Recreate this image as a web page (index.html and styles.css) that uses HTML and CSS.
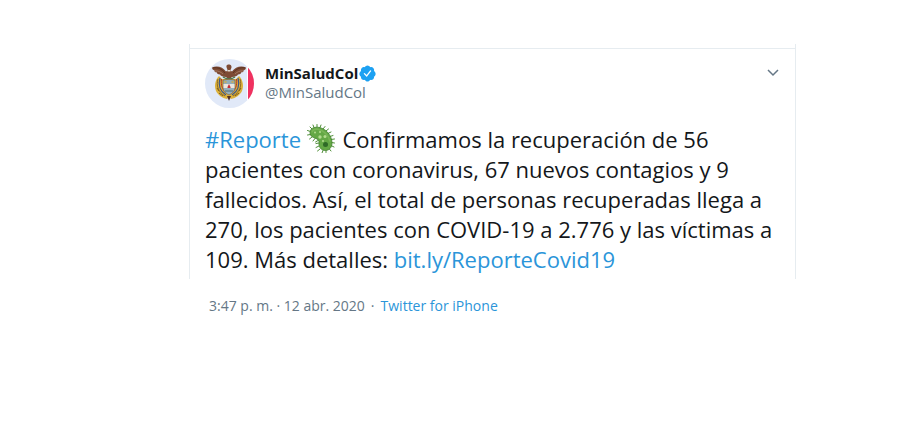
FILE: index.html
```
<!DOCTYPE html>
<html lang="es">
<head>
  <meta charset="UTF-8">
  <meta name="viewport" content="width=device-width, initial-scale=1.0">
  <title>MinSaludCol en Twitter</title>
  <link rel="stylesheet" href="styles.css">
</head>
<body>

  <main class="page">
    <article class="tweet">
      <div class="tweetBody">
        <header class="tweetHeader">
          <svg class="avatar" viewBox="0 0 49 49" aria-hidden="true">
            <defs>
              <clipPath id="avatarClip"><circle cx="24.500" cy="24.500" r="24.500"/></clipPath>
            </defs>
            <g clip-path="url(#avatarClip)">
              <rect width="49" height="49" fill="#e1e9f8"/>
              <rect x="42" width="1" height="49" fill="#fff"/>
              <rect x="43" width="6" height="49" fill="#f0315f"/>
            </g>
            <!-- flags -->
            <path d="M14 17c-4 4-5 10-3 15 2 4 6 7 11 8l2-2 2 2c5-1 9-4 11-8 2-5 1-11-3-15l-3 3H17z" fill="#dcb23c"/>
            <path d="M13 20c-2 6 0 13 7 17M35 20c2 6 0 13-7 17" fill="none" stroke="#8a6a24"/>
            <path d="M15 19c-2 7 0 13 6 17M33 19c2 7 0 13-6 17" fill="none" stroke="#3c5689" stroke-width="1.200"/>
            <path d="M16.500 20c-1 6 1 11 5 14M31.500 20c1 6-1 11-5 14" fill="none" stroke="#b8332f"/>
            <path d="M14 34l4 3M34 34l-4 3M12 29l2 3M36 29l-2 3" stroke="#7c5a1c"/>
            <!-- condor -->
            <path d="M24 5.500c-1.500-.5-3 .7-2.500 2.500.3 1.300 1 2 1 3.500l-1.500 1C18 8 12 6 7 8.500c0 1.500 1 2.500 2.500 3-.3 1 .7 2 2.500 2-.2 1 1 2 3 2 .5 1.500 3 2.500 6 2.500l3 3 3-3c3 0 5.500-1 6-2.500 2 0 3.200-1 3-2 1.800 0 2.800-1 2.500-2 1.500-.5 2.500-1.500 2.500-3C36 6 30 8 27 12.500l-1.500-1c0-1.500 1-2.200 1-3.500 0-1.500-1-2.700-2.500-2.500z" fill="#7d4b35"/>
            <path d="M8 9c5-1 9 1 12 5M40 9c-5-1-9 1-12 5" fill="none" stroke="#5c3020"/>
            <path d="M10 12c3-.5 6 1 8 3M38 12c-3-.5-6 1-8 3" fill="none" stroke="#b08368" stroke-width=".8"/>
            <path d="M22.500 11h3v1.500h-3z" fill="#e6dccf"/>
            <path d="M18 18q6 4 12 0" fill="none" stroke="#497846" stroke-width="1.500"/>
            <!-- shield -->
            <path d="M18 21q6-1.500 12 0v7c0 4-2 6-6 8-4-2-6-4-6-8z" fill="#93aebb" stroke="#8a6a3a" stroke-width=".8"/>
            <path d="M18.500 25h11v4h-11z" fill="#eae6df"/>
            <path d="M22.500 28l1.500-3 1.500 3v1h-3z" fill="#c32e35"/>
            <path d="M19.500 23h2M26.500 23h2" stroke="#d3ad43" stroke-width="1.500"/>
            <path d="M20 32h8" stroke="#5f7c80" stroke-width="1.300"/>
            <path d="M22 37h4l-2 5z" fill="#533025"/>
          </svg>
          <div class="author">
            <div class="nameRow">
              <span class="name">MinSaludCol</span>
              <svg class="verified" viewBox="1 1 22 22" role="img" aria-label="Cuenta verificada">
                <path fill="#1da1f2" d="M22.500 12.500c0-1.600-.9-3-2.100-3.700.1-.4.200-.9.200-1.300 0-2.200-1.700-4-3.800-4-.5 0-.9.100-1.300.3C14.800 2.400 13.500 1.500 12 1.500s-2.800.9-3.400 2.300c-.4-.2-.9-.3-1.300-.3-2.100 0-3.800 1.800-3.800 4 0 .5.100.9.200 1.300-1.200.7-2.200 2.100-2.200 3.700 0 1.500.8 2.800 2 3.500v.5c0 2.200 1.700 4 3.800 4 .5 0 .9-.1 1.300-.3.600 1.400 1.900 2.300 3.400 2.300s2.800-.9 3.400-2.300c.4.200.8.300 1.300.3 2.100 0 3.800-1.800 3.800-4v-.5c1.200-.7 2-2 2-3.500z"/>
                <path d="M8 12.200l3 3 5-6.500" fill="none" stroke="#fff" stroke-width="1.700" stroke-linecap="round" stroke-linejoin="round"/>
              </svg>
            </div>
            <div class="handle">@MinSaludCol</div>
          </div>
          <button class="menuButton" type="button" aria-label="Más opciones">
            <svg class="chevron" viewBox="0 0 12 8" aria-hidden="true">
              <path d="M1 1l5 5 5-5" fill="none" stroke="#657786" stroke-width="1.500"/>
            </svg>
          </button>
        </header>

        <p class="tweetText">
          <a href="#reporte">#Reporte</a>
          <svg class="microbe" viewBox="0 0 28 29" role="img" aria-label="Microbio">
            <path d="M5 5L3 3M7 3.500L6 1M10 3V.5M13 3.500l1-2.500M16 5l2-2.500M19 7l2.500-2M21 9.500l3-1.500M23 12.500l3-1M24 15.500l3.500-.5M24.500 18.500l3 .5M24 21.500l3 1.500M22 24.500l2 2.500M19 26v2.500M16 26.500l-1 2.500M13 25l-2.500 2M12 22l-3 1.500M12 19l-3 .5M11 16.500L8.500 18M8 14.500l-2 2.500M5 13l-2.500 2M3.500 10.500L.5 11M3.500 7.500l-3-1" fill="none" stroke="#4f8f38" stroke-linecap="round"/>
            <path d="M3 8.500C3 5 6.500 3 10.500 3.200 18 3.700 25 11 25 19c0 4.500-3 7.500-6.500 7.500-4 0-6.500-3-6.500-6.500 0-2 .5-3.500-2-5-3-1.500-7-2-7-6.500z" fill="#64a845" stroke="#43812f" stroke-width=".8"/>
            <path d="M5 8.500c0-2.500 3-3.800 6-3.300 6 1 11 7 12 12.300" fill="none" stroke="#79b556" stroke-width="1.600"/>
            <g fill="#b3dc8e">
              <circle cx="8" cy="8.500" r="1"/>
              <circle cx="13" cy="8" r="1"/>
              <circle cx="13" cy="13" r="1.700"/>
              <circle cx="18" cy="12.500" r="1.500"/>
              <circle cx="16" cy="17" r="1"/>
            </g>
            <circle cx="18.500" cy="20.500" r="2.500" fill="#2f6a27"/>
          </svg>
          Confirmamos la recuperación de 56
          pacientes con coronavirus, 67 nuevos contagios y 9
          fallecidos. Así, el total de personas recuperadas llega a
          270, los pacientes con COVID-19 a 2.776 y las víctimas a
          109. Más detalles: <a href="https://bit.ly/ReporteCovid19">bit.ly/ReporteCovid19</a>
        </p>
      </div>
    </article>

    <footer class="tweetMeta">
      <time datetime="2020-04-12T15:47">3:47 p. m. · 12 abr. 2020</time>
      <span>·</span>
      <a href="#source">Twitter for iPhone</a>
    </footer>
  </main>

</body>
</html>
```
FILE: styles.css
```
* {
  box-sizing: border-box;
}

body {
  margin: 0;
  background-color: #fff;
  color: #14171a;
  font-family: "Open Sans", "Noto Sans", sans-serif;
}

a {
  color: #2b95d9;
  text-decoration: none;
}

.page {
  max-width: 905px;
  padding: 44px 109px 24px 189px;
}

.tweet {
  padding-top: 4px;
  border-left: 1px solid #e6ecf0;
  border-right: 1px solid #e6ecf0;
}

.tweetBody {
  padding: 10px 15px 5px;
  border-top: 1px solid #e6ecf0;
}

.tweetHeader {
  display: flex;
  align-items: flex-start;
  gap: 11px;
}

.avatar {
  width: 49px;
  height: 49px;
}

.author {
  flex: 1;
  padding-top: 5px;
  font-size: 15px;
  line-height: 19px;
}

.nameRow {
  display: flex;
  align-items: center;
  gap: 1px;
}

.name {
  font-weight: bold;
}

.verified {
  width: 17px;
  height: 17px;
}

.handle {
  color: #657786;
}

.menuButton {
  display: flex;
  padding: 10px 1px;
  border: 0;
  background: none;
  cursor: pointer;
}

.chevron {
  width: 12px;
  height: 8px;
}

.tweetText {
  margin: 16px 0 0;
  font-size: 22px;
  line-height: 30px;
}

.microbe {
  width: 28px;
  height: 29px;
  margin: -4px 2px -4px 0;
  vertical-align: -1px;
}

.tweetMeta {
  display: flex;
  gap: 6px;
  padding: 17px 20px;
  color: #657786;
  font-size: 14px;
  line-height: 20px;
}
```
